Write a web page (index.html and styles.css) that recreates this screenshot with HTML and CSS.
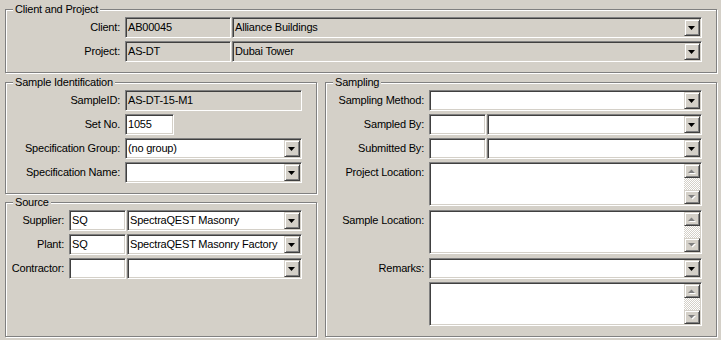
FILE: index.html
```html
<!DOCTYPE html>
<html>
<head>
<meta charset="utf-8">
<link rel="stylesheet" href="styles.css">
</head>
<body>
<div class="form">
  <fieldset class="group top">
    <legend>Client and Project</legend>
    <div class="rows">
      <div class="row">
        <div class="lbl w114">Client:</div>
        <div class="field ro w106"><span class="val">AB00045</span></div>
        <div class="field ro combo grow"><span class="val">Alliance Buildings</span><span class="btn"><svg width="7" height="4" viewBox="0 0 7 4"><polygon points="0,0 7,0 3.5,4" fill="#000"/></svg></span></div>
      </div>
      <div class="row">
        <div class="lbl w114">Project:</div>
        <div class="field ro w106"><span class="val">AS-DT</span></div>
        <div class="field ro combo grow"><span class="val">Dubai Tower</span><span class="btn"><svg width="7" height="4" viewBox="0 0 7 4"><polygon points="0,0 7,0 3.5,4" fill="#000"/></svg></span></div>
      </div>
    </div>
  </fieldset>

  <div class="cols">
    <div class="leftcol">
      <fieldset class="group ident">
        <legend>Sample Identification</legend>
        <div class="rows">
          <div class="row">
            <div class="lbl w114">SampleID:</div>
            <div class="field ro grow"><span class="val">AS-DT-15-M1</span></div>
          </div>
          <div class="row">
            <div class="lbl w114">Set No.</div>
            <div class="field w49"><span class="val">1055</span></div>
          </div>
          <div class="row">
            <div class="lbl w114">Specification Group:</div>
            <div class="field combo grow"><span class="val">(no group)</span><span class="btn"><svg width="7" height="4" viewBox="0 0 7 4"><polygon points="0,0 7,0 3.5,4" fill="#000"/></svg></span></div>
          </div>
          <div class="row">
            <div class="lbl w114">Specification Name:</div>
            <div class="field combo grow"><span class="val"></span><span class="btn"><svg width="7" height="4" viewBox="0 0 7 4"><polygon points="0,0 7,0 3.5,4" fill="#000"/></svg></span></div>
          </div>
        </div>
      </fieldset>

      <fieldset class="group source">
        <legend>Source</legend>
        <div class="rows">
          <div class="row">
            <div class="lbl w58">Supplier:</div>
            <div class="field w57"><span class="val">SQ</span></div>
            <div class="field combo grow"><span class="val">SpectraQEST Masonry</span><span class="btn"><svg width="7" height="4" viewBox="0 0 7 4"><polygon points="0,0 7,0 3.5,4" fill="#000"/></svg></span></div>
          </div>
          <div class="row">
            <div class="lbl w58">Plant:</div>
            <div class="field w57"><span class="val">SQ</span></div>
            <div class="field combo grow"><span class="val">SpectraQEST Masonry Factory</span><span class="btn"><svg width="7" height="4" viewBox="0 0 7 4"><polygon points="0,0 7,0 3.5,4" fill="#000"/></svg></span></div>
          </div>
          <div class="row">
            <div class="lbl w58">Contractor:</div>
            <div class="field w57"><span class="val"></span></div>
            <div class="field combo grow"><span class="val"></span><span class="btn"><svg width="7" height="4" viewBox="0 0 7 4"><polygon points="0,0 7,0 3.5,4" fill="#000"/></svg></span></div>
          </div>
        </div>
      </fieldset>
    </div>

    <fieldset class="group sampling">
      <legend>Sampling</legend>
      <div class="rows">
        <div class="row">
          <div class="lbl w98">Sampling Method:</div>
          <div class="field combo grow"><span class="val"></span><span class="btn"><svg width="7" height="4" viewBox="0 0 7 4"><polygon points="0,0 7,0 3.5,4" fill="#000"/></svg></span></div>
        </div>
        <div class="row">
          <div class="lbl w98">Sampled By:</div>
          <div class="field w57"><span class="val"></span></div>
          <div class="field combo grow"><span class="val"></span><span class="btn"><svg width="7" height="4" viewBox="0 0 7 4"><polygon points="0,0 7,0 3.5,4" fill="#000"/></svg></span></div>
        </div>
        <div class="row">
          <div class="lbl w98">Submitted By:</div>
          <div class="field w57"><span class="val"></span></div>
          <div class="field combo grow"><span class="val"></span><span class="btn"><svg width="7" height="4" viewBox="0 0 7 4"><polygon points="0,0 7,0 3.5,4" fill="#000"/></svg></span></div>
        </div>
        <div class="row tall">
          <div class="lbl w98">Project Location:</div>
          <div class="field area grow"><span class="val"></span>
            <span class="scroll">
              <span class="sbtn"><svg width="8" height="5" viewBox="0 0 8 5"><polygon points="1,5 8,5 4.5,1.5" fill="#fff"/><polygon points="0,4 7,4 3.5,0.5" fill="#808080"/></svg></span>
              <span class="track"></span>
              <span class="sbtn"><svg width="8" height="5" viewBox="0 0 8 5"><polygon points="1,1 8,1 4.5,4.5" fill="#fff"/><polygon points="0,0 7,0 3.5,3.5" fill="#808080"/></svg></span>
            </span>
          </div>
        </div>
        <div class="row tall gap4">
          <div class="lbl w98">Sample Location:</div>
          <div class="field area grow"><span class="val"></span>
            <span class="scroll">
              <span class="sbtn"><svg width="8" height="5" viewBox="0 0 8 5"><polygon points="1,5 8,5 4.5,1.5" fill="#fff"/><polygon points="0,4 7,4 3.5,0.5" fill="#808080"/></svg></span>
              <span class="track"></span>
              <span class="sbtn"><svg width="8" height="5" viewBox="0 0 8 5"><polygon points="1,1 8,1 4.5,4.5" fill="#fff"/><polygon points="0,0 7,0 3.5,3.5" fill="#808080"/></svg></span>
            </span>
          </div>
        </div>
        <div class="row gap4">
          <div class="lbl w98">Remarks:</div>
          <div class="field combo grow"><span class="val"></span><span class="btn"><svg width="7" height="4" viewBox="0 0 7 4"><polygon points="0,0 7,0 3.5,4" fill="#000"/></svg></span></div>
        </div>
        <div class="row tall">
          <div class="lbl w98"></div>
          <div class="field area grow"><span class="val"></span>
            <span class="scroll">
              <span class="sbtn"><svg width="8" height="5" viewBox="0 0 8 5"><polygon points="1,5 8,5 4.5,1.5" fill="#fff"/><polygon points="0,4 7,4 3.5,0.5" fill="#808080"/></svg></span>
              <span class="track"></span>
              <span class="sbtn"><svg width="8" height="5" viewBox="0 0 8 5"><polygon points="1,1 8,1 4.5,4.5" fill="#fff"/><polygon points="0,0 7,0 3.5,3.5" fill="#808080"/></svg></span>
            </span>
          </div>
        </div>
      </div>
    </fieldset>
  </div>
</div>
</body>
</html>
```

FILE: styles.css
```css
html, body {
  margin: 0;
  padding: 0;
}
body {
  background: #d4d0c8;
  font-family: "Liberation Sans", Arial, sans-serif;
  font-size: 11px;
  letter-spacing: -0.2px;
  color: #000;
  width: 721px;
  height: 340px;
  overflow: hidden;
}
.form {
  padding: 3px 4px 0 5px;
  display: flex;
  flex-direction: column;
  gap: 3px;
}
.group {
  margin: 0;
  padding: 1px 14px 10px 0;
  border: 1px solid #808080;
  box-shadow: inset 1px 1px 0 #fff, 1px 1px 0 #fff;
  min-width: 0;
}
.group legend {
  margin-left: 7px;
  padding: 0 2px;
  line-height: 13px;
  font-size: 11px;
  background: #d4d0c8;
}
.cols {
  display: grid;
  grid-template-columns: 312px 392px;
  column-gap: 8px;
}
.leftcol {
  display: flex;
  flex-direction: column;
  gap: 2px;
}
.source {
  flex: 1;
}
.rows {
  display: flex;
  flex-direction: column;
  gap: 3px;
}
.row {
  display: flex;
  align-items: flex-start;
  height: 21px;
}
.row.tall {
  height: 44px;
}
.row.gap4 {
  margin-top: 1px;
}
.lbl {
  flex: none;
  text-align: right;
  line-height: 21px;
  margin-right: 5px;
  white-space: nowrap;
}
.w114 { width: 114px; }
.w98 { width: 98px; }
.w58 { width: 58px; }
.w106 { width: 106px; flex: none; margin-right: 1px; }
.w57 { width: 57px; flex: none; margin-right: 1px; }
.w49 { width: 49px; flex: none; }
.grow { flex: 1; min-width: 0; }
.field {
  box-sizing: border-box;
  height: 21px;
  border: 1px solid;
  border-color: #808080 #fff #fff #808080;
  box-shadow: inset 1px 1px 0 #404040, inset -1px -1px 0 #d4d0c8;
  background: #fff;
  display: flex;
  align-items: flex-start;
}
.field.ro {
  background: #d4d0c8;
}
.field.area {
  height: 44px;
}
.val {
  flex: 1;
  min-width: 0;
  padding: 3px 2px 0 2px;
  line-height: 13px;
  white-space: nowrap;
  overflow: hidden;
}
.btn {
  flex: none;
  box-sizing: border-box;
  width: 16px;
  height: 17px;
  margin: 1px 1px 0 0;
  background: #d4d0c8;
  border: 1px solid;
  border-color: #d4d0c8 #404040 #404040 #d4d0c8;
  box-shadow: inset 1px 1px 0 #fff, inset -1px -1px 0 #808080;
  display: flex;
  align-items: center;
  justify-content: center;
}
.btn svg {
  display: block;
  margin-left: -1px;
}
.scroll {
  flex: none;
  width: 16px;
  height: 40px;
  margin: 1px 1px 0 0;
  display: flex;
  flex-direction: column;
}
.sbtn {
  flex: none;
  box-sizing: border-box;
  height: 14px;
  background: #d4d0c8;
  border: 1px solid;
  border-color: #d4d0c8 #404040 #404040 #d4d0c8;
  box-shadow: inset 1px 1px 0 #fff, inset -1px -1px 0 #808080;
  display: flex;
  align-items: center;
  justify-content: center;
}
.sbtn svg {
  display: block;
}
.track {
  flex: 1;
  background: repeating-conic-gradient(#d4d0c8 0 25%, #fff 0 50%) 0 0 / 2px 2px;
}
```
